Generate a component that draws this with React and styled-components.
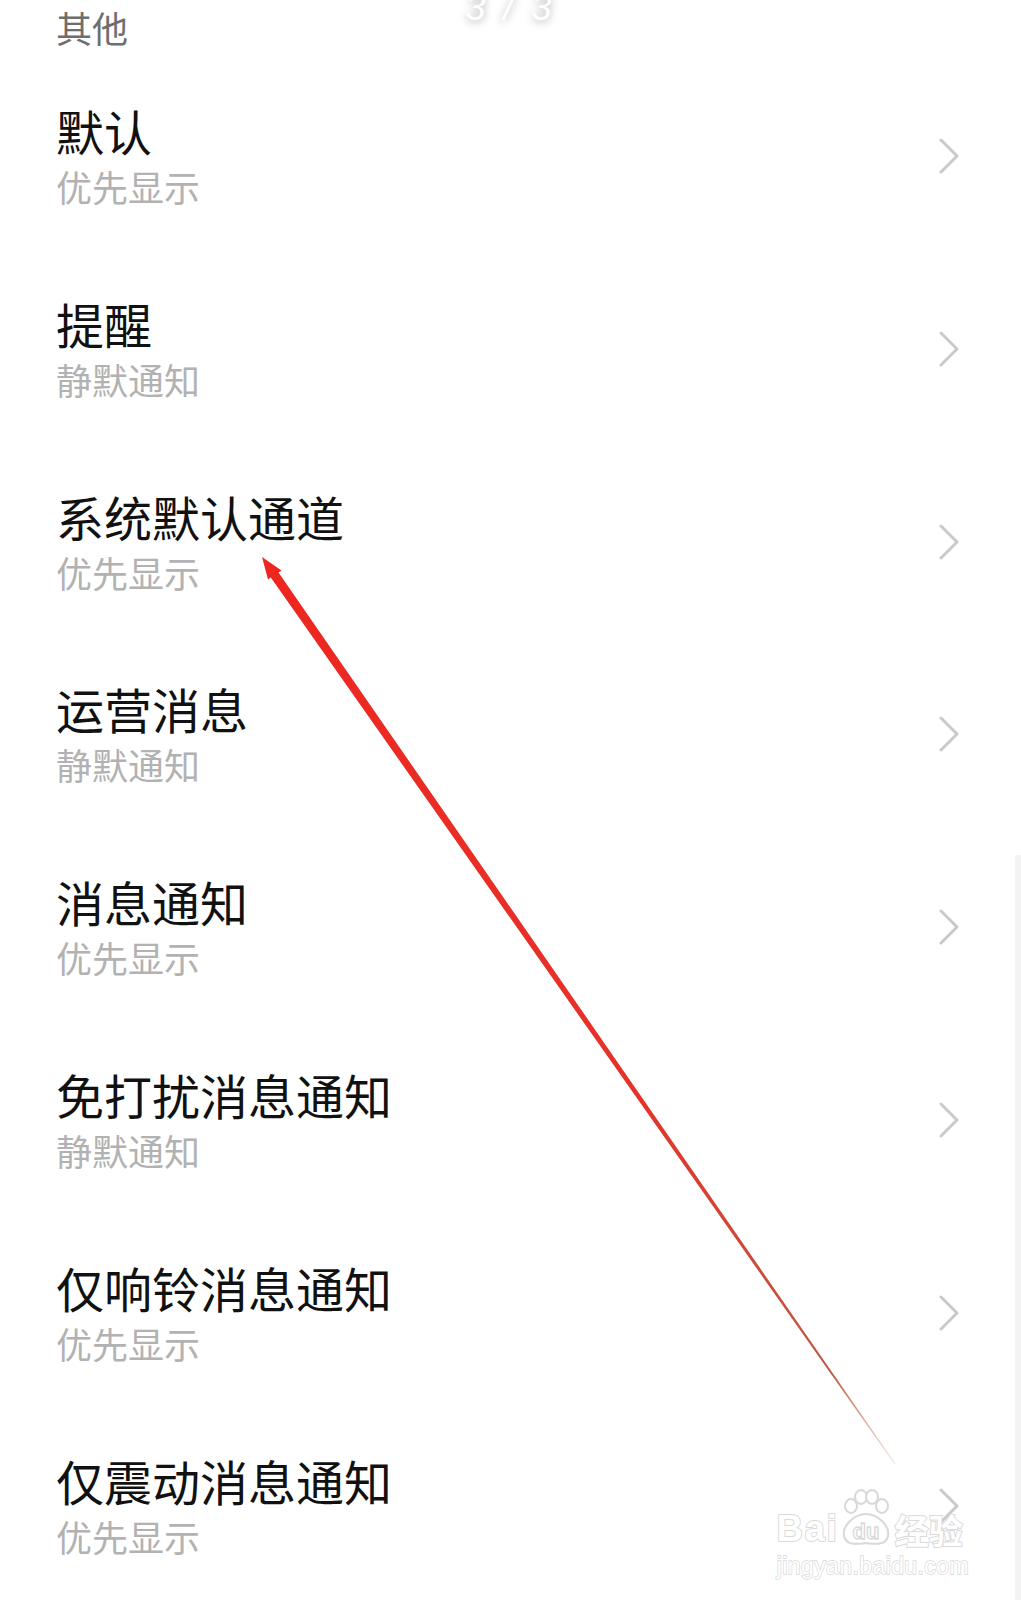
import React from "react";
import styled, { createGlobalStyle } from "styled-components";

const GlobalStyle = createGlobalStyle`
  html, body {
    margin: 0;
    padding: 0;
    background: #fff;
  }
  body {
    font-family: "Noto Sans CJK SC", "Noto Sans", sans-serif;
  }
`;

const Page = styled.div`
  position: relative;
  width: 1021px;
  height: 1600px;
  overflow: hidden;
  background: #fff;
`;

const SectionHeader = styled.div`
  height: 54px;
  line-height: 54px;
  padding-left: 56px;
  font-size: 36px;
  color: #6e6e6e;
`;

const List = styled.div`
  display: flex;
  flex-direction: column;
`;

const Row = styled.div`
  display: flex;
  justify-content: space-between;
  align-items: flex-start;
  box-sizing: border-box;
  height: 192.8px;
  padding: 48px 61px 0 56px;
`;

const Texts = styled.div`
  display: flex;
  flex-direction: column;
`;

const Title = styled.div`
  font-size: 48px;
  line-height: 56px;
  color: #111;
`;

const Sub = styled.div`
  font-size: 36px;
  line-height: 56px;
  color: #b2b2b2;
`;

const ChevronBox = styled.svg`
  margin-top: 36px;
  flex: none;
`;

const PageIndicator = styled.div`
  position: absolute;
  top: -13px;
  left: 0;
  right: 0;
  text-align: center;
  font-family: "Liberation Sans", sans-serif;
  font-size: 36px;
  font-style: italic;
  letter-spacing: 4px;
  color: #fff;
  text-shadow: 0 2px 8px rgba(0, 0, 0, 0.35);
`;

const ScrollTrack = styled.div`
  position: absolute;
  right: 0;
  top: 855px;
  bottom: 0;
  width: 6px;
  background: #f3f3f3;
`;

const Annotation = styled.svg`
  position: absolute;
  left: 0;
  top: 0;
  pointer-events: none;
`;

const Watermark = styled.div`
  position: absolute;
  right: 52px;
  bottom: 22px;
  display: flex;
  flex-direction: column;
  align-items: flex-start;
  pointer-events: none;
`;

const MarkTop = styled.div`
  display: flex;
  align-items: flex-end;
`;

const MarkWord = styled.span`
  font-family: ${(p) => (p.cjk ? '"Noto Sans CJK SC", sans-serif' : '"Liberation Sans", sans-serif')};
  font-weight: 700;
  font-size: ${(p) => p.size}px;
  line-height: 1;
  letter-spacing: ${(p) => (p.cjk ? 0 : 2)}px;
  color: #fff;
  -webkit-text-stroke: 2px #dadada;
  paint-order: stroke fill;
`;

const MarkUrl = styled.span`
  font-family: "Liberation Sans", sans-serif;
  font-size: 23px;
  line-height: 1;
  margin-top: 8px;
  letter-spacing: 0.4px;
  color: #fff;
  -webkit-text-stroke: 1.4px #d8d8d8;
  paint-order: stroke fill;
`;

const rows = [
  ["默认", "优先显示"],
  ["提醒", "静默通知"],
  ["系统默认通道", "优先显示"],
  ["运营消息", "静默通知"],
  ["消息通知", "优先显示"],
  ["免打扰消息通知", "静默通知"],
  ["仅响铃消息通知", "优先显示"],
  ["仅震动消息通知", "优先显示"],
];

function Chevron() {
  return (
    <ChevronBox width="22" height="36" viewBox="0 0 22 36">
      <path d="M3 2 L19 18 L3 34" fill="none" stroke="#c9c9c9" strokeWidth="3" strokeLinecap="round" strokeLinejoin="round" />
    </ChevronBox>
  );
}

function Paw() {
  return (
    <svg width="54" height="58" viewBox="0 0 54 58" style={{ margin: "0 2px 0 0" }}>
      <g fill="#fff" stroke="#d8d8d8" strokeWidth="2">
        <ellipse cx="12" cy="17" rx="6" ry="7" />
        <ellipse cx="22" cy="8" rx="6" ry="7" />
        <ellipse cx="33" cy="8" rx="6" ry="7" />
        <ellipse cx="43" cy="17" rx="6" ry="7" />
        <path d="M27 25 C39 25 51 37 49 47 C47 57 35 55 27 54 C19 55 7 57 5 47 C3 37 15 25 27 25 Z" />
      </g>
      <text x="27" y="50" textAnchor="middle" fontFamily="Liberation Sans, sans-serif" fontSize="22" fontWeight="700" fill="#fff" stroke="#d8d8d8" strokeWidth="1.3">du</text>
    </svg>
  );
}

export default function App() {
  return (
    <>
      <GlobalStyle />
      <Page>
        <SectionHeader>其他</SectionHeader>
        <List>
          {rows.map(([t, s]) => (
            <Row key={t}>
              <Texts>
                <Title>{t}</Title>
                <Sub>{s}</Sub>
              </Texts>
              <Chevron />
            </Row>
          ))}
        </List>

        <PageIndicator>3 / 3</PageIndicator>
        <ScrollTrack />

        <Annotation width="1021" height="1600" viewBox="0 0 1021 1600">
          <defs>
            <linearGradient id="arrowFade" x1="262" y1="557" x2="895" y2="1464" gradientUnits="userSpaceOnUse">
              <stop offset="0" stopColor="#ee2620" />
              <stop offset="0.6" stopColor="#e5332a" />
              <stop offset="0.9" stopColor="#b8472e" stopOpacity="0.9" />
              <stop offset="1" stopColor="#c87a60" stopOpacity="0.2" />
            </linearGradient>
          </defs>
          <polygon
            points="262,557 281.5,570.5 278.5,572.6 895.5,1463.7 894.5,1464.3 270.8,577.6 268,579.6"
            fill="url(#arrowFade)"
          />
        </Annotation>

        <Watermark>
          <MarkTop>
            <MarkWord size={36}>Bai</MarkWord>
            <Paw />
            <MarkWord cjk size={34}>经验</MarkWord>
          </MarkTop>
          <MarkUrl>jingyan.baidu.com</MarkUrl>
        </Watermark>
      </Page>
    </>
  );
}
